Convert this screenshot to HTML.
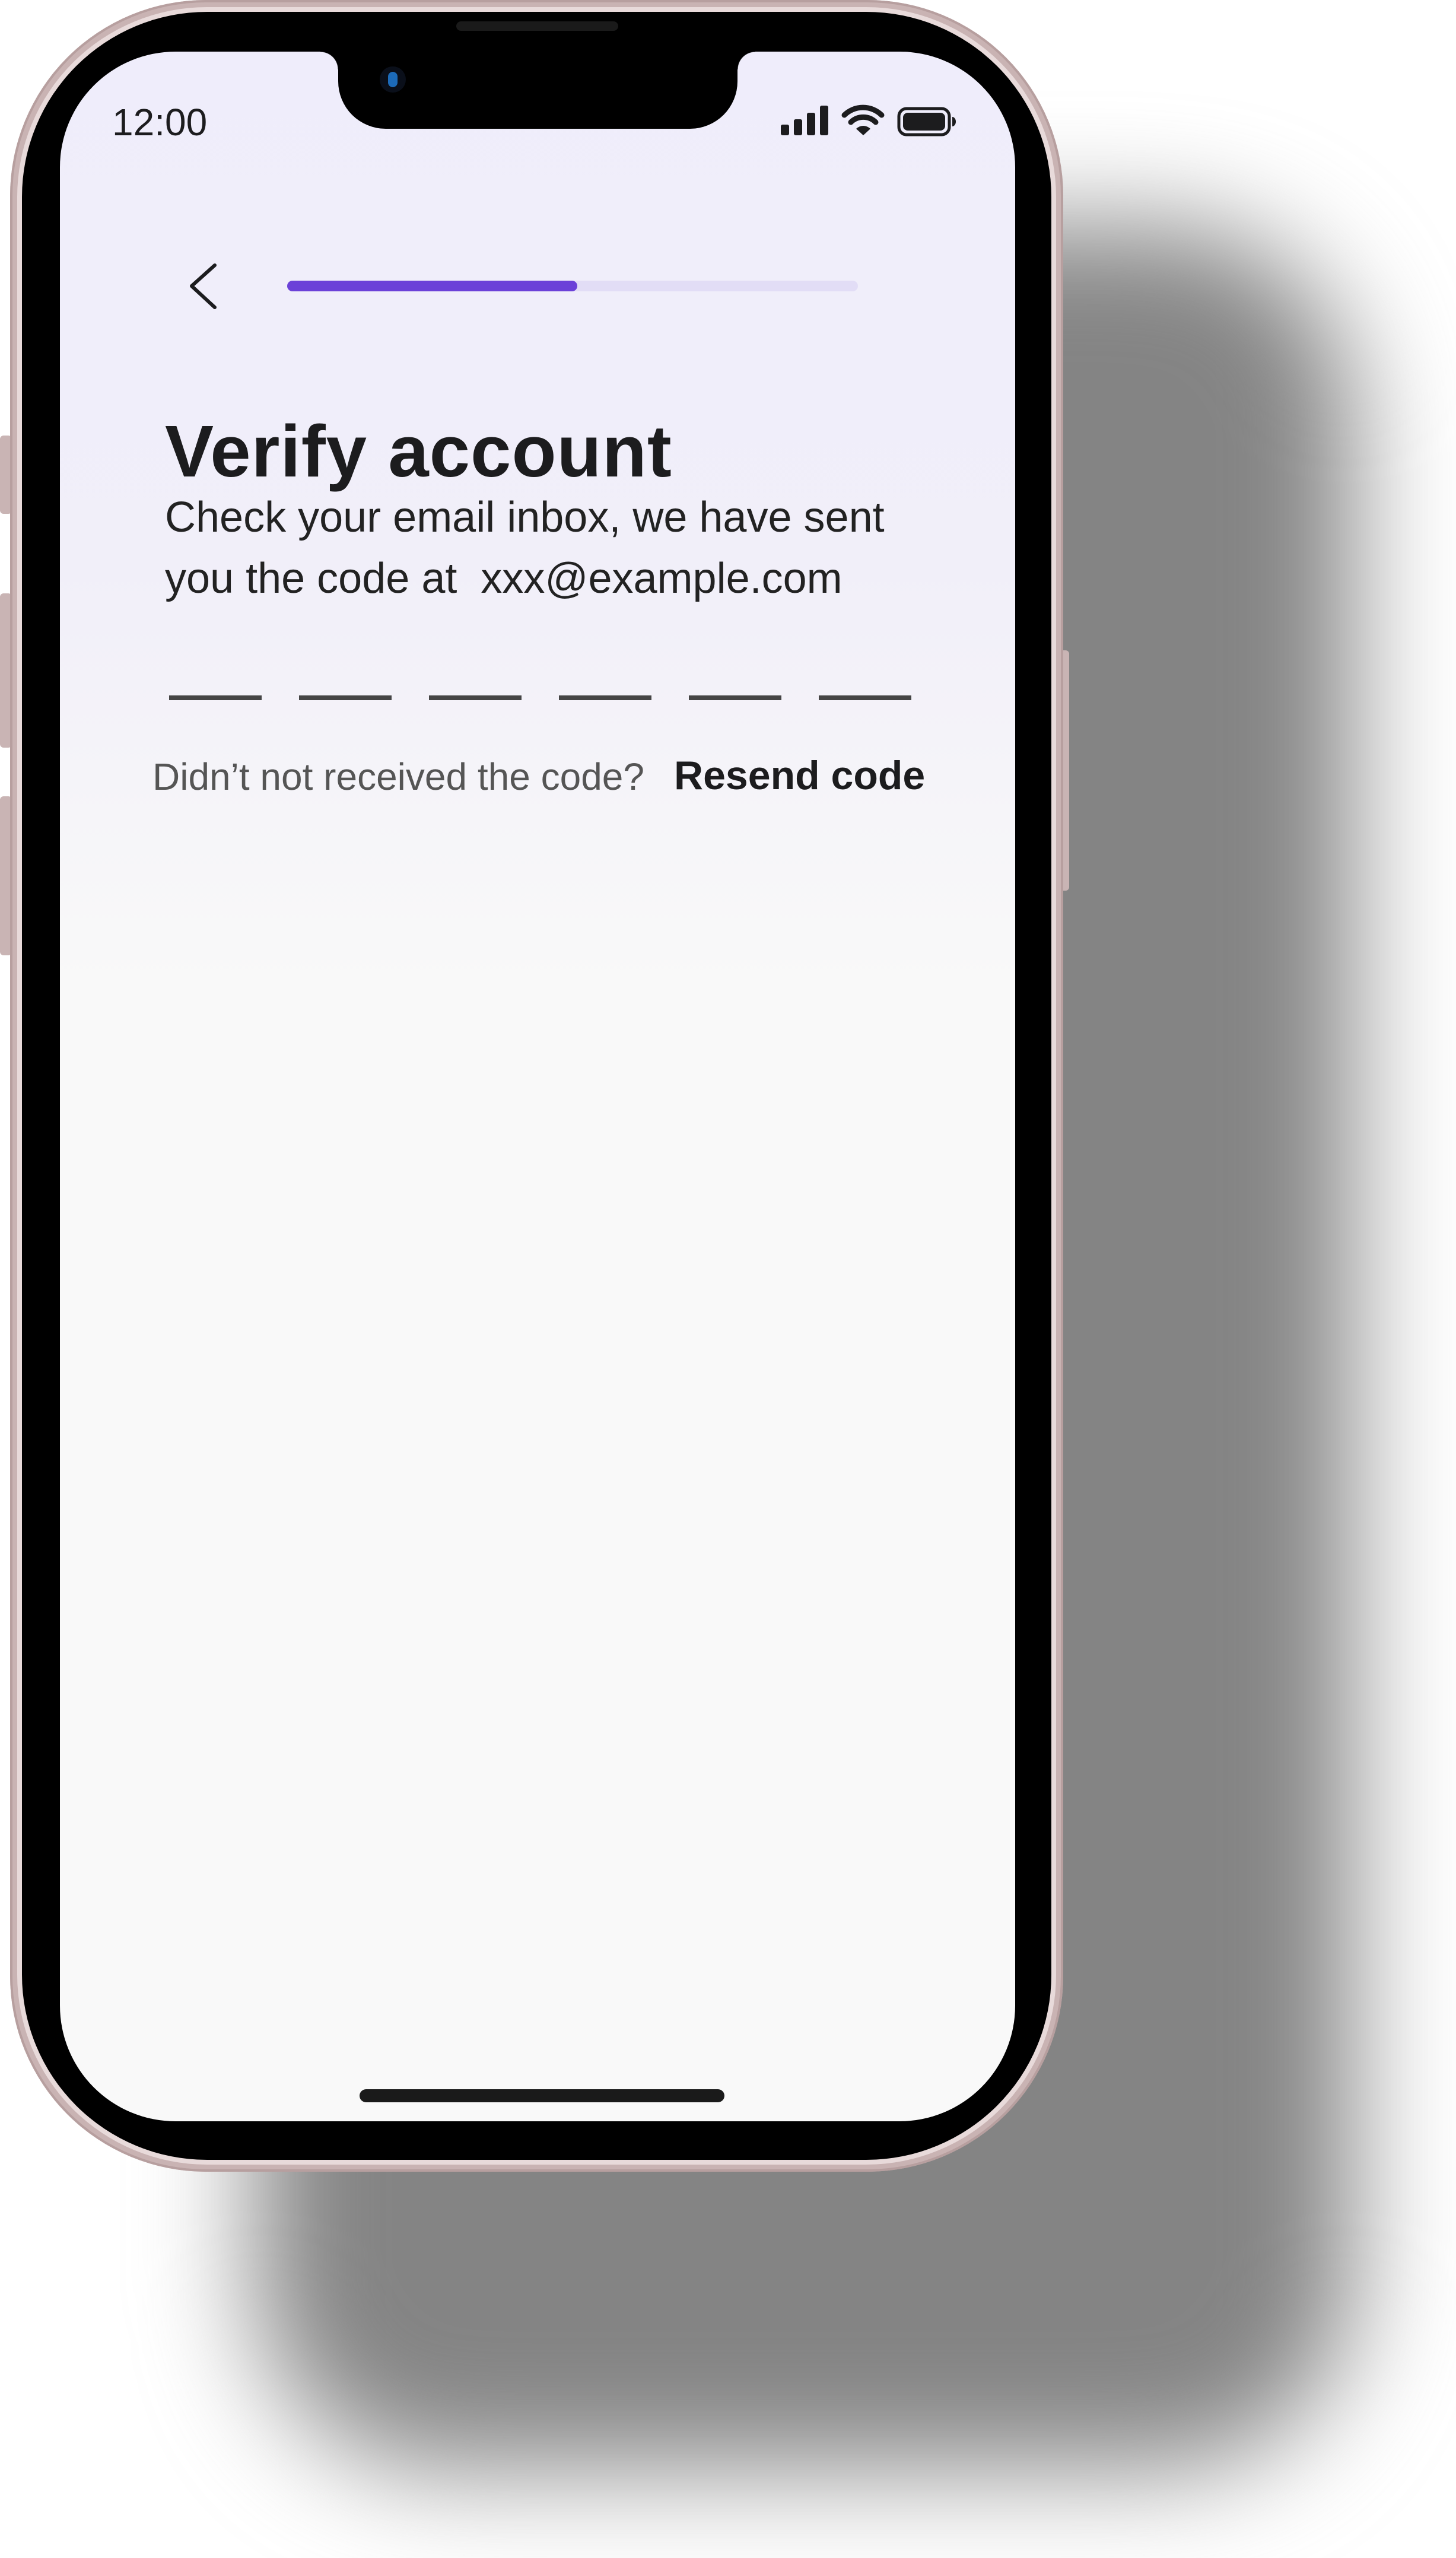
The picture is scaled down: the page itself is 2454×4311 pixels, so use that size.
<!DOCTYPE html>
<html><head><meta charset="utf-8"><style>
html,body{margin:0;padding:0;}
body{width:2454px;height:4311px;position:relative;background:#fff;overflow:hidden;font-family:"Liberation Sans",sans-serif;}
.abs{position:absolute;}
.t{position:absolute;white-space:nowrap;line-height:1;}
</style></head><body>
<div class="abs" style="left:430px;top:380px;width:1850px;height:3780px;background:#848484;border-radius:320px;filter:blur(95px);"></div>
<div class="abs" style="left:0;top:734px;width:20px;height:132px;background:#c9b4b4;border-radius:6px;"></div>
<div class="abs" style="left:0;top:1000px;width:20px;height:260px;background:#c9b4b4;border-radius:6px;"></div>
<div class="abs" style="left:0;top:1342px;width:20px;height:268px;background:#c9b4b4;border-radius:6px;"></div>
<div class="abs" style="left:1782px;top:1096px;width:20px;height:405px;background:#c9b4b4;border-radius:6px;"></div>
<div class="abs" style="left:17px;top:0;width:1775px;height:3660px;border-radius:330px;background:#c9b3b3;box-shadow:inset 0 0 0 4px #b79f9f;"></div>
<div class="abs" style="left:29px;top:12px;width:1751px;height:3636px;border-radius:320px;background:#e8dada;"></div>
<div class="abs" style="left:37px;top:20px;width:1735px;height:3620px;border-radius:312px;background:#000;"></div>
<div class="abs" style="left:101px;top:87px;width:1610px;height:3488px;border-radius:195px;overflow:hidden;background:linear-gradient(180deg,#efedfb 0%,#f1eff9 25%,#f9f9f9 45%,#f9f9f9 100%);"></div>
<div class="abs" style="left:570px;top:80px;width:673px;height:137px;background:#000;border-radius:0 0 80px 80px;"></div>
<div class="abs" style="left:540px;top:87px;width:30px;height:30px;background:radial-gradient(circle at 0 100%,transparent 29px,#000 30px);"></div>
<div class="abs" style="left:1243px;top:87px;width:30px;height:30px;background:radial-gradient(circle at 100% 100%,transparent 29px,#000 30px);"></div>
<div class="abs" style="left:769px;top:36px;width:273px;height:16px;background:#1a1a1a;border-radius:8px;"></div>
<div class="abs" style="left:640px;top:112px;width:44px;height:44px;background:#0a0f1a;border-radius:50%;"></div>
<div class="abs" style="left:654px;top:121px;width:16px;height:26px;background:#1c6ab8;border-radius:8px;"></div>
<div class="t" style="left:189px;top:174px;font-size:64px;color:#1c1c1e;">12:00</div>
<svg class="abs" style="left:1310px;top:170px" width="310" height="70" viewBox="0 0 310 70">
  <rect x="6" y="40" width="14" height="18" rx="3" fill="#1c1c1e"/>
  <rect x="28" y="31" width="14" height="27" rx="3" fill="#1c1c1e"/>
  <rect x="50" y="20" width="14" height="38" rx="3" fill="#1c1c1e"/>
  <rect x="72" y="8" width="14" height="50" rx="3" fill="#1c1c1e"/>
  <path d="M113 24 A45 45 0 0 1 176 24" stroke="#1c1c1e" stroke-width="9" fill="none" stroke-linecap="round"/>
  <path d="M124 36 A30 30 0 0 1 166 36" stroke="#1c1c1e" stroke-width="9" fill="none" stroke-linecap="round"/>
  <path d="M133 47 L145 58 L157 47 A17 17 0 0 0 133 47 Z" fill="#1c1c1e"/>
  <rect x="205" y="13" width="85" height="44" rx="13" fill="none" stroke="#1c1c1e" stroke-width="5"/>
  <rect x="212" y="20" width="71" height="30" rx="8" fill="#1c1c1e"/>
  <path d="M295 27 a6 8 0 0 1 0 16 z" fill="#1c1c1e"/>
</svg>
<svg class="abs" style="left:310px;top:440px" width="70" height="90" viewBox="0 0 70 90">
  <polyline points="52,7 13,42 52,78" fill="none" stroke="#1c1c1e" stroke-width="6" stroke-linecap="round" stroke-linejoin="round"/>
</svg>
<div class="abs" style="left:484px;top:473px;width:962px;height:18px;background:#e2ddf6;border-radius:9px;"></div>
<div class="abs" style="left:484px;top:473px;width:489px;height:18px;background:#6b41d8;border-radius:9px;"></div>
<div class="t" style="left:278px;top:700px;font-size:123px;font-weight:bold;color:#1c1c1e;letter-spacing:1px;">Verify account</div>
<div class="t" style="left:278px;top:836px;font-size:72px;color:#222;">Check your email inbox, we have sent</div>
<div class="t" style="left:278px;top:939px;font-size:72px;color:#222;">you the code at&nbsp; xxx@example.com</div>
<div class="abs" style="left:285px;top:1172px;width:156px;height:8px;background:#454545;"></div>
<div class="abs" style="left:504px;top:1172px;width:156px;height:8px;background:#454545;"></div>
<div class="abs" style="left:723px;top:1172px;width:156px;height:8px;background:#454545;"></div>
<div class="abs" style="left:942px;top:1172px;width:156px;height:8px;background:#454545;"></div>
<div class="abs" style="left:1161px;top:1172px;width:156px;height:8px;background:#454545;"></div>
<div class="abs" style="left:1380px;top:1172px;width:156px;height:8px;background:#454545;"></div>
<div class="t" style="left:257px;top:1277px;font-size:64px;color:#555;">Didn’t not received the code?</div>
<div class="t" style="left:1136px;top:1273px;font-size:68px;font-weight:bold;color:#1c1c1e;">Resend code</div>
<div class="abs" style="left:606px;top:3521px;width:615px;height:22px;background:#1a1a1a;border-radius:11px;"></div>
</body></html>
